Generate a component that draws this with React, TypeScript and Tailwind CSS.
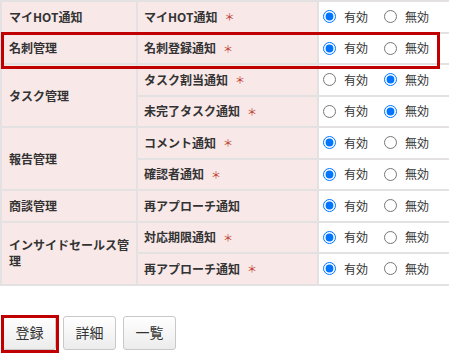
import React from 'react';

type Item = { label: string; required: boolean; enabled: boolean };
type Group = { name: string; items: Item[] };

const groups: Group[] = [
  { name: 'マイHOT通知', items: [{ label: 'マイHOT通知', required: true, enabled: true }] },
  { name: '名刺管理', items: [{ label: '名刺登録通知', required: true, enabled: true }] },
  {
    name: 'タスク管理',
    items: [
      { label: 'タスク割当通知', required: true, enabled: false },
      { label: '未完了タスク通知', required: true, enabled: false },
    ],
  },
  {
    name: '報告管理',
    items: [
      { label: 'コメント通知', required: true, enabled: true },
      { label: '確認者通知', required: true, enabled: true },
    ],
  },
  { name: '商談管理', items: [{ label: '再アプローチ通知', required: false, enabled: true }] },
  {
    name: 'インサイドセールス管理',
    items: [
      { label: '対応期限通知', required: true, enabled: true },
      { label: '再アプローチ通知', required: true, enabled: true },
    ],
  },
];

function RadioPair({ name, enabled }: { name: string; enabled: boolean }) {
  return (
    <div className="flex flex-1 items-center bg-white pl-[4px] text-[12px] text-[#333]">
      <label className="flex items-center gap-[8px]">
        <input type="radio" name={name} defaultChecked={enabled} className="m-0 h-[13px] w-[13px]" />
        <span>有効</span>
      </label>
      <label className="ml-[16px] flex items-center gap-[8px]">
        <input type="radio" name={name} defaultChecked={!enabled} className="m-0 h-[13px] w-[13px]" />
        <span>無効</span>
      </label>
    </div>
  );
}

export default function App() {
  let row = 0;
  const cells: React.ReactNode[] = [];
  groups.forEach((g, gi) => {
    const span = g.items.length;
    cells.push(
      <div
        key={`g${gi}`}
        className="flex items-center bg-[#f8e8e8] px-[7px] text-[12px] font-bold leading-[16px] text-[#333]"
        style={{ gridRow: `${row + 1} / span ${span}`, gridColumn: '1' }}
      >
        {g.name}
      </div>
    );
    g.items.forEach((it, ii) => {
      const r = row + ii + 1;
      cells.push(
        <div
          key={`l${gi}-${ii}`}
          className="flex items-center bg-[#f8e8e8] pl-[6px] text-[12px] font-bold text-[#333]"
          style={{ gridRow: `${r}`, gridColumn: '2' }}
        >
          {it.label}
          {it.required && <span className="ml-[7px] text-[10px] font-normal text-[#c0392b]">＊</span>}
        </div>
      );
      cells.push(
        <div key={`r${gi}-${ii}`} className="flex" style={{ gridRow: `${r}`, gridColumn: '3' }}>
          <RadioPair name={`n${gi}-${ii}`} enabled={it.enabled} />
        </div>
      );
    });
    row += span;
  });

  return (
    <div className="relative h-[353px] w-[449px] overflow-hidden bg-white font-['Noto_Sans_CJK_JP',sans-serif]">
      <div className="grid grid-cols-[134px_179px_1fr] auto-rows-[29.5px] gap-[2px] bg-[#e3e1e1] py-[2px] pl-[2px]">
        {cells}
      </div>

      <div className="mt-[30px] flex gap-[7px] pl-[3px]">
        {['登録', '詳細', '一覧'].map((t) => (
          <button
            key={t}
            className="h-[34px] w-[53px] rounded-[3px] border border-[#c8c8c8] bg-gradient-to-b from-white to-[#ececec] text-[14px] text-[#333]"
          >
            {t}
          </button>
        ))}
      </div>

      {/* annotation boxes */}
      <div className="absolute left-[1px] top-[32px] h-[37px] w-[439px] border-[3px] border-[#c00000]" />
      <div className="absolute left-[1px] top-[315px] h-[38px] w-[58px] border-[3px] border-[#c00000]" />
    </div>
  );
}
